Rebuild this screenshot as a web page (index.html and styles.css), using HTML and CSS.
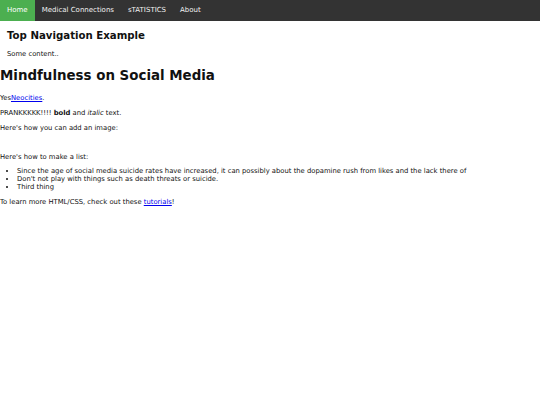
FILE: index.html
```html
<!DOCTYPE html>
<html>

<head>
    <title>Mindfulness on Social Media</title>
    <link rel="stylesheet" href="styles.css">
</head>

<body>
    <div class="topnav">
        <a class="active" href="#home">Home</a>
        <a href="#news">Medical Connections</a>
        <a href="#contact">sTATISTICS</a>
        <a href="#about">About</a>
    </div>

    <div class="intro">
        <h2>Top Navigation Example</h2>
        <p>Some content..</p>
    </div>

    <h1>Mindfulness on Social Media</h1>

    <p>Yes<a href="#">Neocities</a>.</p>

    <p>PRANKKKKK!!!! <strong>bold</strong> and <em>italic</em> text.</p>

    <p>Here's how you can add an image:</p>
    <div class="image-slot"></div>

    <p class="list-intro">Here's how to make a list:</p>

    <ul>
        <li>Since the age of social media suicide rates have increased, it can possibly about the dopamine rush from likes and the lack there of</li>
        <li>Don't not play with things such as death threats or suicide.</li>
        <li>Third thing</li>
    </ul>

    <p>To learn more HTML/CSS, check out these <a href="#">tutorials</a>!</p>
</body>
</html>
```

FILE: styles.css
```css
body {
    margin: 0;
    font-family: "DejaVu Sans", Verdana, sans-serif;
    font-size: 6.8px;
    line-height: 8.1px;
    color: #111;
    background-color: #fff;
}

.topnav {
    display: flex;
    background-color: #333;
}

.topnav a {
    color: #f2f2f2;
    text-align: center;
    padding: 6px 7px;
    line-height: 8.6px;
    text-decoration: none;
    font-size: 7px;
}

.topnav a.active {
    background-color: #4caf50;
    color: white;
}

.intro {
    padding-left: 7px;
}

h2 {
    font-size: 10.2px;
    line-height: 12.2px;
    margin: 9px 0 8.7px;
}

h1 {
    font-size: 13.4px;
    line-height: 16.3px;
    margin: 9.4px 0;
}

p {
    margin: 7px 0;
}

em {
    font-style: italic;
}

a {
    color: #0000ee;
}

.image-slot {
    height: 7px;
    margin: 7px 0;
}

.list-intro {
    margin-bottom: 6px;
}

ul {
    margin: 6px 0 7px;
    padding-left: 17px;
}
```
